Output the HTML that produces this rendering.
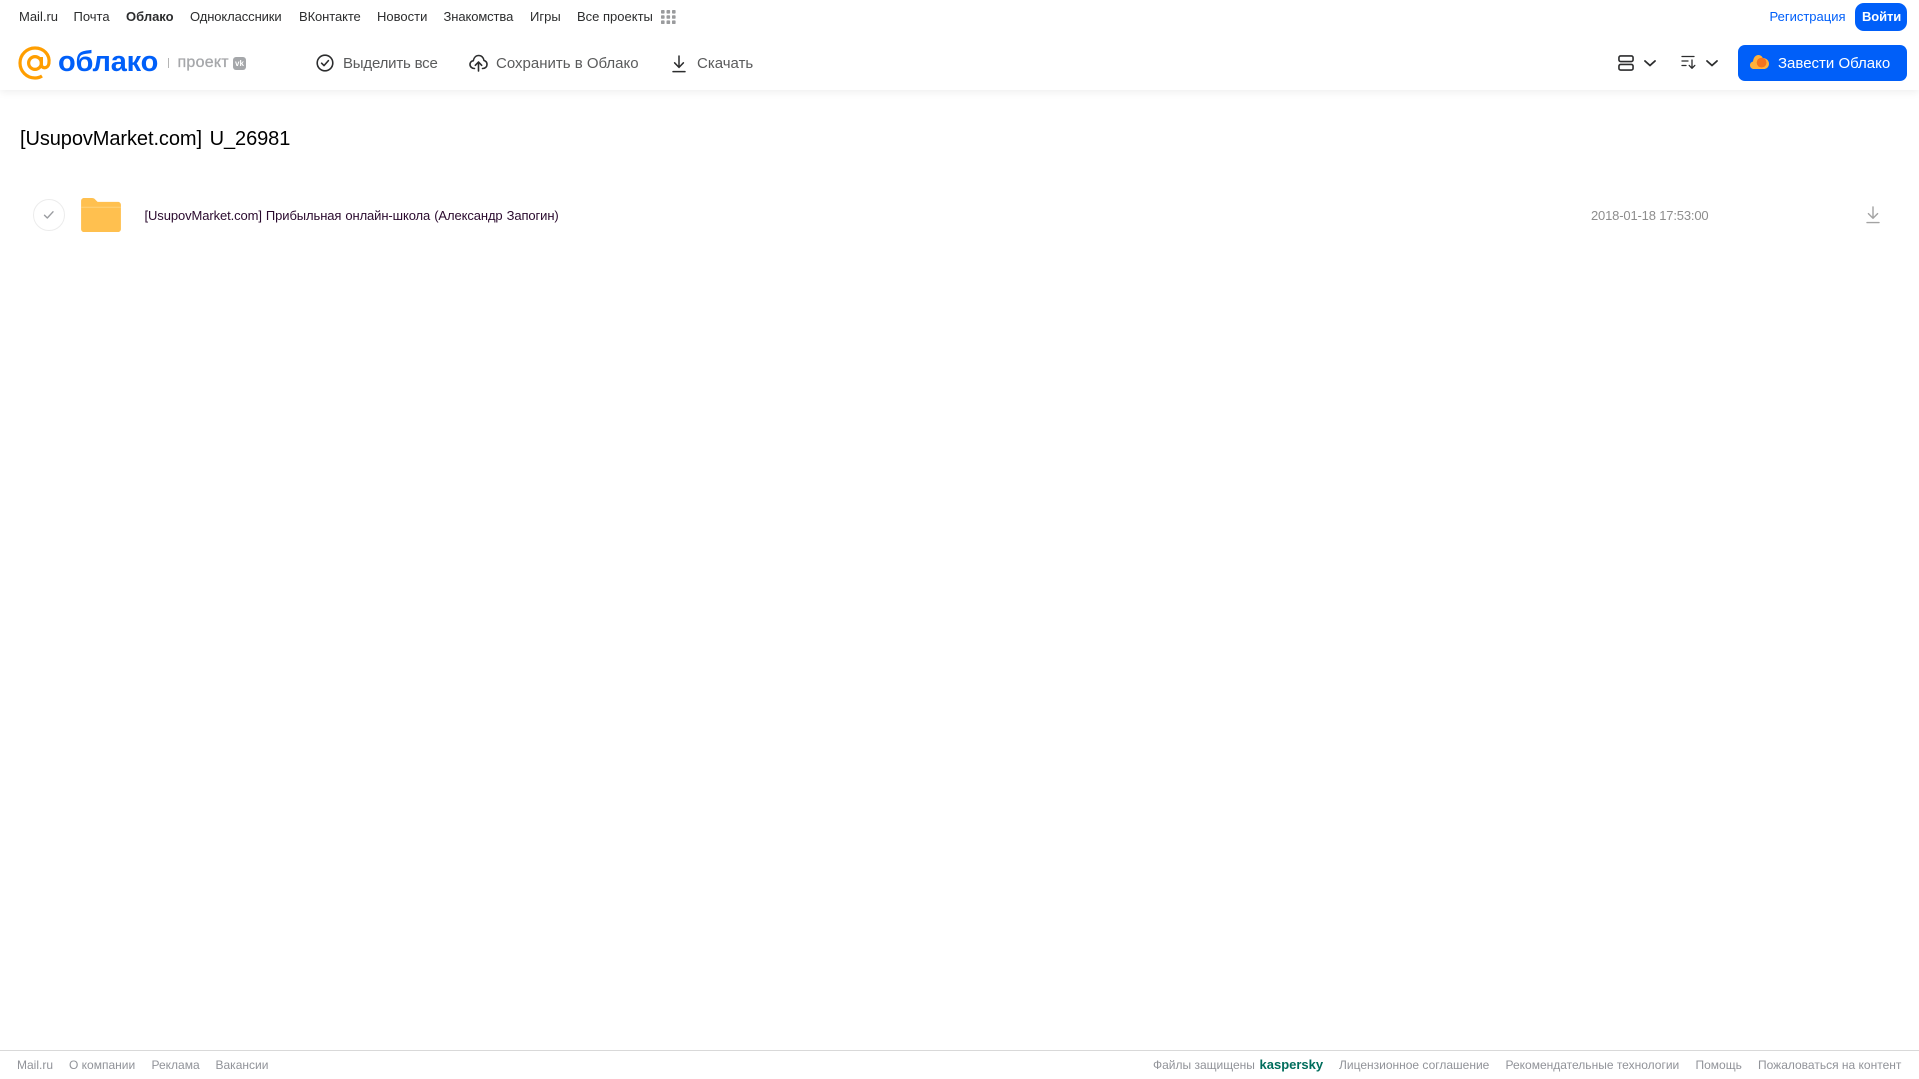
<!DOCTYPE html>
<html lang="ru"><head><meta charset="utf-8"><title>Облако</title>
<style>
html,body{margin:0;padding:0;background:#fff}
body{width:1919px;height:1079px;position:relative;overflow:hidden;font-family:"Liberation Sans",sans-serif}
.t{position:absolute;white-space:nowrap;line-height:18px;height:18px}
.n{top:8px;font-size:13px;color:#2c2d2e}
.b{top:55px;font-size:15px;color:#5a5b5c}
.f{top:1056px;font-size:12px;color:#919399}
svg{position:absolute;overflow:visible}
#hd{position:absolute;left:0;top:0;width:1919px;height:90px;background:#fff;box-shadow:0 2px 8px rgba(0,0,0,.07)}
</style></head><body>
<div id="hd"></div>
<span class="t n" style="left:19px">Mail.ru</span>
<span class="t n" style="left:73.5px">Почта</span>
<span class="t n" style="left:126px;font-weight:bold">Облако</span>
<span class="t n" style="left:190px;letter-spacing:-.1px">Одноклассники</span>
<span class="t n" style="left:299px;letter-spacing:-.1px">ВКонтакте</span>
<span class="t n" style="left:377px">Новости</span>
<span class="t n" style="left:443.5px;letter-spacing:-.1px">Знакомства</span>
<span class="t n" style="left:530px">Игры</span>
<span class="t n" style="left:577px">Все проекты</span>
<svg style="left:661px;top:10px" width="15" height="14" fill="#9a9b9d"><rect x="0" y="0" width="3.6" height="3.6" rx=".8"/><rect x="5.5" y="0" width="3.6" height="3.6" rx=".8"/><rect x="11" y="0" width="3.6" height="3.6" rx=".8"/><rect x="0" y="5.2" width="3.6" height="3.6" rx=".8"/><rect x="5.5" y="5.2" width="3.6" height="3.6" rx=".8"/><rect x="11" y="5.2" width="3.6" height="3.6" rx=".8"/><rect x="0" y="10.4" width="3.6" height="3.6" rx=".8"/><rect x="5.5" y="10.4" width="3.6" height="3.6" rx=".8"/><rect x="11" y="10.4" width="3.6" height="3.6" rx=".8"/></svg>
<span class="t n" style="left:1769.5px;color:#005ff9;font-size:13px">Регистрация</span>
<div style="position:absolute;left:1855px;top:3px;width:52px;height:28px;border-radius:9px;background:#005ff9"></div>
<span class="t" style="left:1862px;top:8px;font-size:13px;color:#fff;font-weight:bold;letter-spacing:-.1px">Войти</span>

<svg style="left:18px;top:46px" width="34" height="34" viewBox="0 0 34 34" fill="none" stroke="#ff9e00" stroke-width="3.2"><circle cx="17" cy="17" r="6.4"/><path d="M23.4 11V18.5C23.4 23 30 23 30.9 17.5C32.3 8.5 25.5 2 17 2C8.7 2 2 8.7 2 17C2 25.3 8.7 32 17 32C19.8 32 22 31.3 24 30"/></svg>
<span class="t" style="left:58px;top:44px;height:36px;line-height:36px;font-size:29px;font-weight:bold;color:#005ff9;letter-spacing:-.2px">облако</span>
<div style="position:absolute;left:168px;top:58px;width:1px;height:10px;background:#b5b5b5"></div>
<span class="t" style="left:177.5px;top:54px;font-size:16px;color:#a5a7aa;letter-spacing:.25px;-webkit-text-stroke:.3px #a5a7aa">проект</span>
<div style="position:absolute;left:233px;top:57px;width:13px;height:13px;border-radius:3px;background:#a5a7aa;color:#fff;font-size:8px;font-weight:bold;line-height:13px;text-align:center">vk</div>

<svg style="left:316px;top:54px" width="18" height="18" viewBox="0 0 18 18" fill="none" stroke="#2c2d2e" stroke-width="1.6"><circle cx="9" cy="9" r="7.8"/><path d="M5.6 9.2L8 11.6L12.4 6.6" stroke-linecap="round" stroke-linejoin="round"/></svg>
<span class="t b" style="left:343px;letter-spacing:-.2px">Выделить все</span>
<svg style="left:469px;top:54px" width="19" height="18" viewBox="0 0 19 18" fill="none" stroke="#2c2d2e" stroke-width="1.6" stroke-linecap="round" stroke-linejoin="round"><path d="M5.5 14.5C3 14.5 1 12.8 1 10.5C1 8.5 2.4 7 4.3 6.7C4.9 3.5 7 1.5 9.7 1.5C12.5 1.5 14.6 3.6 15 6.5C16.9 7 18 8.6 18 10.5C18 12.8 16.2 14.5 13.5 14.5"/><path d="M9.5 17V8.5M6.3 11.3L9.5 8L12.7 11.3"/></svg>
<span class="t b" style="left:496px">Сохранить в Облако</span>
<svg style="left:672px;top:55px" width="14" height="18" viewBox="0 0 14 18" fill="none" stroke="#2c2d2e" stroke-width="1.5" stroke-linecap="round" stroke-linejoin="round"><path d="M7 1V12M2.6 7.8L7 12.4L11.4 7.8M1 16.6H13"/></svg>
<span class="t b" style="left:697px">Скачать</span>

<svg style="left:1618px;top:55px" width="16" height="16" viewBox="0 0 17 17" fill="none" stroke="#2c2d2e" stroke-width="1.7"><rect x="1" y="1" width="15" height="6" rx="1.8"/><rect x="1" y="10" width="15" height="6" rx="1.8"/></svg>
<svg style="left:1644px;top:60px" width="12" height="7" fill="none" stroke="#2c2d2e" stroke-width="1.8" stroke-linecap="round" stroke-linejoin="round"><path d="M1 1L6 5.5L11 1"/></svg>
<svg style="left:1681px;top:55px" width="16" height="15" viewBox="0 0 16 15" fill="none" stroke="#2c2d2e" stroke-width="1.3" stroke-linecap="round" stroke-linejoin="round"><path d="M1 1.5H13M1 6H7M1 10.5H5M11 5V13M8.2 10.4L11 13.3L13.8 10.4"/></svg>
<svg style="left:1706px;top:60px" width="12" height="7" fill="none" stroke="#2c2d2e" stroke-width="1.8" stroke-linecap="round" stroke-linejoin="round"><path d="M1 1L6 5.5L11 1"/></svg>
<div style="position:absolute;left:1738px;top:45px;width:169px;height:36px;border-radius:7px;background:#005ff9"></div>
<svg style="left:1750px;top:54px" width="19" height="16" viewBox="0 0 19 16"><path d="M4 15C1.6 15 0 13.3 0 11.2C0 9.3 1.3 7.9 3 7.5C3.5 3.5 5.6 1 8.3 1C10.5 1 12 2.3 12.8 4C16.2 4 19 6.5 19 9.7C19 12.8 16.6 15 13.6 15Z" fill="#ffb13c"/><circle cx="11.6" cy="8.6" r="4.9" fill="#f5741f"/></svg>
<span class="t" style="left:1778px;top:55px;font-size:15px;color:#fff">Завести Облако</span>

<div class="t" style="left:20px;top:126px;height:26px;line-height:26px;font-size:20px;color:#000;letter-spacing:-.08px;word-spacing:2.2px">[UsupovMarket.com] U_26981</div>

<div style="position:absolute;left:33px;top:199px;width:30px;height:30px;border-radius:50%;border:1px solid #ececec;box-sizing:content-box"></div>
<svg style="left:43px;top:210px" width="12" height="10" fill="none" stroke="#9a9ca0" stroke-width="1.4" stroke-linecap="round" stroke-linejoin="round"><path d="M1.5 5.2L4.3 8L10 1.8"/></svg>
<svg style="left:81px;top:198px" width="40" height="34" viewBox="0 0 41 35"><path d="M0 3C0 1.3 1.3 0 3 0H11C13 0 14 .7 15 2L17 4H38C39.7 4 41 5.3 41 7V32C41 33.7 39.7 35 38 35H3C1.3 35 0 33.7 0 32Z" fill="#ffc04f"/><path d="M0 9H41V10H0Z" fill="#ffd27a"/></svg>
<span class="t" style="left:144.5px;top:207px;font-size:13px;color:#2a0a2e;letter-spacing:-.1px;word-spacing:.5px">[UsupovMarket.com] Прибыльная онлайн-школа (Александр Запогин)</span>
<span class="t" style="left:1591px;top:207px;font-size:13px;color:#8d8d8d;letter-spacing:-.17px">2018-01-18 17:53:00</span>
<svg style="left:1866px;top:206px" width="14" height="18" viewBox="0 0 14 18" fill="none" stroke="#a3a3a3" stroke-width="1.4" stroke-linecap="round" stroke-linejoin="round"><path d="M7 1V12M2.4 7.6L7 12.2L11.6 7.6M1 16.6H13"/></svg>

<div style="position:absolute;left:0;top:1050px;width:1919px;height:1px;background:#d9d9d9"></div>
<span class="t f" style="left:17px">Mail.ru</span>
<span class="t f" style="left:69px">О компании</span>
<span class="t f" style="left:151.5px">Реклама</span>
<span class="t f" style="left:215.5px">Вакансии</span>
<span class="t f" style="left:1153px">Файлы защищены</span>
<span class="t f" style="left:1259.5px;color:#006d5c;font-size:13px;font-weight:bold">kaspersky</span>
<span class="t f" style="left:1339px">Лицензионное соглашение</span>
<span class="t f" style="left:1505.5px">Рекомендательные технологии</span>
<span class="t f" style="left:1695.5px">Помощь</span>
<span class="t f" style="left:1758px">Пожаловаться на контент</span>
</body></html>
